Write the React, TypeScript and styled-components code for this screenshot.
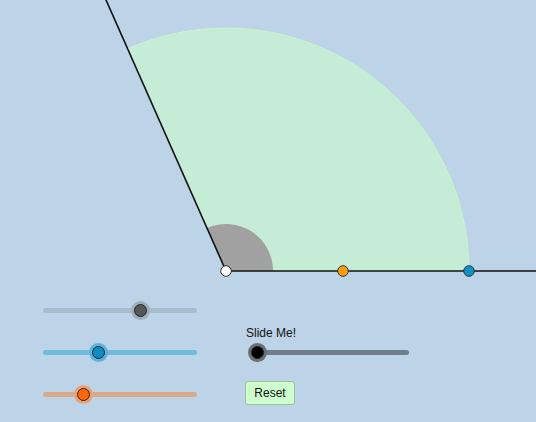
import styled, { createGlobalStyle } from "styled-components";

const GlobalStyle = createGlobalStyle`
  html, body {
    margin: 0;
    padding: 0;
    background: #bdd3e7;
  }
  body {
    font-family: "Liberation Sans", Arial, sans-serif;
  }
`;

const Applet = styled.div`
  width: 536px;
  height: 422px;
  background: #bdd3e7;
  overflow: hidden;
  display: flex;
  flex-direction: column;
`;

const Canvas = styled.svg`
  display: block;
  flex: none;
`;

const Controls = styled.div`
  display: flex;
  gap: 48px;
  padding: 1px 0 0 43px;
`;

const SliderColumn = styled.div`
  display: flex;
  flex-direction: column;
  width: 154px;
`;

const SliderRow = styled.div<{ $h?: number }>`
  height: ${(p) => p.$h ?? 42}px;
  display: flex;
  align-items: center;
`;

const SideColumn = styled.div`
  display: flex;
  flex-direction: column;
  align-items: flex-start;
  padding-top: 37px;
`;

const Label = styled.div`
  font-size: 12px;
  line-height: 14px;
  color: #111;
  height: 14px;
  padding-left: 1px;
`;

const SideSliderRow = styled.div`
  height: 24px;
  display: flex;
  align-items: center;
  padding-left: 5px;
`;

const Track = styled.div<{ $color: string; $width: number }>`
  position: relative;
  width: ${(p) => p.$width}px;
  height: 5px;
  border-radius: 3px;
  background: ${(p) => p.$color};
`;

const Thumb = styled.div<{ $pos: number; $fill: string; $halo: string }>`
  position: absolute;
  top: 50%;
  left: ${(p) => p.$pos}px;
  width: 11px;
  height: 11px;
  margin: -6.5px 0 0 -6.5px;
  border-radius: 50%;
  background: ${(p) => p.$fill};
  border: 1px solid #222;
  box-shadow: 0 0 0 3px ${(p) => p.$halo};
`;

const ResetButton = styled.button`
  margin-top: 17px;
  width: 50px;
  height: 24px;
  padding: 0;
  background: #ccffcc;
  border: 1px solid #9fbf9f;
  border-radius: 3px;
  font-family: "Liberation Sans", Arial, sans-serif;
  font-size: 12px;
  color: #111;
  cursor: pointer;
`;

interface SliderProps {
  width: number;
  pos: number;
  track: string;
  fill: string;
  halo: string;
}

const Slider = ({ width, pos, track, fill, halo }: SliderProps) => (
  <Track $color={track} $width={width}>
    <Thumb $pos={pos} $fill={fill} $halo={halo} />
  </Track>
);

const vx = 226;
const vy = 271;
const ang = (113.9 * Math.PI) / 180;
const arcPt = (r: number) =>
  `${(vx + r * Math.cos(ang)).toFixed(2)},${(vy - r * Math.sin(ang)).toFixed(2)}`;

export default function App() {
  return (
    <>
      <GlobalStyle />
      <Applet>
        <Canvas width={536} height={288} viewBox="0 0 536 288">
          <path
            d={`M${vx},${vy} L${vx + 243},${vy} A243,243 0 0,0 ${arcPt(243)} Z`}
            fill="#c5ecd6"
            stroke="#c9f5c9"
            strokeWidth={1}
          />
          <path
            d={`M${vx},${vy} L${vx + 47},${vy} A47,47 0 0,0 ${arcPt(47)} Z`}
            fill="#a1a1a1"
          />
          <line x1={vx} y1={vy} x2={101.6} y2={-10} stroke="#111" strokeWidth={1.6} />
          <line x1={vx} y1={vy} x2={540} y2={vy} stroke="#111" strokeWidth={1.6} />
          <circle cx={vx} cy={vy} r={5.3} fill="#fff" stroke="#333" strokeWidth={1} />
          <circle cx={343} cy={vy} r={5.3} fill="#ff9c0a" stroke="#333" strokeWidth={1} />
          <circle cx={469} cy={vy} r={5.3} fill="#1191c8" stroke="#333" strokeWidth={1} />
        </Canvas>
        <Controls>
          <SliderColumn>
            <SliderRow>
              <Slider width={154} pos={97} track="#a9bcca" fill="#585858" halo="#9fb0bd" />
            </SliderRow>
            <SliderRow>
              <Slider width={154} pos={55} track="#6dbcdc" fill="#0d8cc6" halo="#5bb4e0" />
            </SliderRow>
            <SliderRow $h={43}>
              <Slider width={154} pos={40} track="#d8aa8b" fill="#ff6600" halo="#e9a274" />
            </SliderRow>
          </SliderColumn>
          <SideColumn>
            <Label>Slide Me!</Label>
            <SideSliderRow>
              <Slider width={159} pos={7} track="#6f7f89" fill="#000" halo="#6a6f73" />
            </SideSliderRow>
            <ResetButton>Reset</ResetButton>
          </SideColumn>
        </Controls>
      </Applet>
    </>
  );
}
